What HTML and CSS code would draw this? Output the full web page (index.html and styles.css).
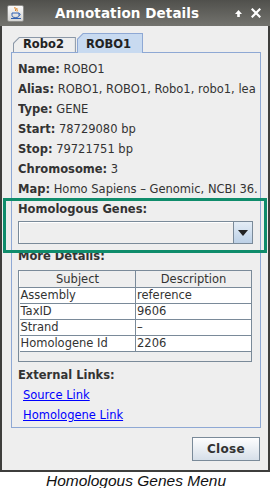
FILE: index.html
```html
<!DOCTYPE html>
<html>
<head>
<meta charset="utf-8">
<link rel="stylesheet" href="styles.css">
</head>
<body>
<div class="window">
  <div class="titlebar">
    <span class="app-icon">
      <svg width="14" height="14" viewBox="0 0 14 14">
        <path d="M6 1 C5 2.5 7.5 3 6.5 5 M8 2 C7 3.5 9 4 8 5.5" stroke="#e07a10" stroke-width="1" fill="none"/>
        <path d="M3 7 h7 v2.5 c0 1.5 -1.5 2 -3.5 2 s-3.5 -0.5 -3.5 -2 z" fill="none" stroke="#3060b0" stroke-width="1"/>
        <path d="M10 7.5 c1.8 0 1.8 2 0 2" fill="none" stroke="#3060b0" stroke-width="0.8"/>
        <path d="M2 12.5 h10" stroke="#3060b0" stroke-width="1"/>
      </svg>
    </span>
    <span class="title">Annotation Details</span>
    <span class="tb-btns">
      <svg width="9" height="9" viewBox="0 0 9 9"><path d="M4.5 1 L8 5 H5.8 V8 H3.2 V5 H1 Z" fill="#ffffff"/></svg>
      <svg width="10" height="10" viewBox="0 0 10 10"><path d="M1.5 1.5 L8.5 8.5 M8.5 1.5 L1.5 8.5" stroke="#ffffff" stroke-width="2.2" stroke-linecap="square"/></svg>
    </span>
  </div>
  <div class="content">
    <div class="tabs">
      <div class="tab"><div class="tab-in">Robo2</div></div>
      <div class="tab sel"><div class="tab-in">ROBO1</div></div>
    </div>
    <div class="panel">
      <div class="row"><b>Name:</b> ROBO1</div>
      <div class="row"><b>Alias:</b> ROBO1, ROBO1, Robo1, robo1, lea</div>
      <div class="row"><b>Type:</b> GENE</div>
      <div class="row"><b>Start:</b> 78729080 bp</div>
      <div class="row"><b>Stop:</b> 79721751 bp</div>
      <div class="row"><b>Chromosome:</b> 3</div>
      <div class="row"><b>Map:</b> Homo Sapiens – Genomic, NCBI 36.</div>
      <div class="row"><b>Homologous Genes:</b></div>
      <div class="combo">
        <div class="combo-field"></div>
        <div class="combo-btn">
          <svg width="10" height="6" viewBox="0 0 10 6"><path d="M0 0 H10 L5 6 Z" fill="#222"/></svg>
        </div>
      </div>
      <div class="row more"><b>More Details:</b></div>
      <div class="scroll">
        <table class="grid">
          <thead><tr><th class="c1">Subject</th><th>Description</th></tr></thead>
          <tbody>
            <tr><td>Assembly</td><td>reference</td></tr>
            <tr><td>TaxID</td><td>9606</td></tr>
            <tr><td>Strand</td><td>–</td></tr>
            <tr><td>Homologene Id</td><td>2206</td></tr>
          </tbody>
        </table>
      </div>
      <div class="row ext"><b>External Links:</b></div>
      <div class="row link"><a href="#">Source Link</a></div>
      <div class="row link"><a href="#">Homologene Link</a></div>
    </div>
    <div class="buttons"><button class="btn">Close</button></div>
  </div>
  <div class="highlight"></div>
</div>
<div class="caption">Homologous Genes Menu</div>
</body>
</html>
```
FILE: styles.css
```css
* { box-sizing: border-box; }
html, body { margin: 0; padding: 0; background: #ffffff; }
body {
  width: 272px;
  font-family: "DejaVu Sans", sans-serif;
  font-size: 11.5px;
  color: #333333;
}
.window {
  position: relative;
  width: 270px;
  height: 472px;
  border: 2px solid #3e3e3c;
  border-top: 0;
  background: #eeeeee;
  display: flex;
  flex-direction: column;
}
.titlebar {
  height: 26px;
  margin: 0 -2px;
  background: linear-gradient(#50504c, #73736e);
  display: flex;
  align-items: center;
  color: #ffffff;
}
.app-icon {
  margin-left: 7px;
  width: 17px;
  height: 17px;
  border: 1px solid #8d8d8a;
  border-radius: 2px;
  background: linear-gradient(#fafafa, #d4d4d2);
  display: flex;
  align-items: center;
  justify-content: center;
}
.title {
  margin-left: 31px;
  font-weight: bold;
  font-size: 13.5px;
  letter-spacing: 0.1px;
}
.tb-btns {
  margin-left: auto;
  margin-right: 9px;
  display: flex;
  align-items: center;
  gap: 8px;
}
.content {
  flex: 1;
  display: flex;
  flex-direction: column;
  padding: 7px 6px 0 9px;
}
.tabs {
  display: flex;
  align-items: flex-end;
  height: 19px;
  padding-left: 2px;
}
.tab {
  height: 15px;
  background: #8b98a8;
  clip-path: polygon(6px 0, 100% 0, 100% 100%, 0 100%, 0 6px);
  padding: 1px 1px 0 1px;
}
.tab-in {
  height: 100%;
  background: #eeeeee;
  clip-path: polygon(5.5px 0, 100% 0, 100% 100%, 0 100%, 0 5.5px);
  font-weight: bold;
  font-size: 11.5px;
  line-height: 13px;
  padding: 0 11px 0 9px;
  color: #222222;
}
.tab.sel {
  height: 20px;
  margin-bottom: -1px;
  margin-left: 1px;
  background: #8ea8d4;
  position: relative;
  z-index: 1;
}
.tab.sel .tab-in {
  background: #c8daf0;
  line-height: 21px;
  padding: 0 11px 0 8px;
}
.panel {
  width: 250px;
  height: 376px;
  border: 1px solid #8ea8d4;
  padding: 6px 0 0 6px;
  overflow: hidden;
}
.row {
  height: 20px;
  line-height: 20px;
  white-space: nowrap;
  overflow: hidden;
  width: 239px;
}
.row b { color: #333333; }
.combo {
  margin-top: 2px;
  width: 235px;
  height: 23px;
  border: 1px solid #7a8a99;
  display: flex;
}
.combo-field {
  flex: 1;
  background: #eeeeee;
  border-top: 1px solid #ffffff;
  border-left: 1px solid #ffffff;
}
.combo-btn {
  width: 19px;
  border-left: 1px solid #7a8a99;
  background: linear-gradient(#e4edf6, #bcd0e6);
  display: flex;
  align-items: center;
  justify-content: center;
}
.row.more { margin-top: 2px; }
.scroll {
  margin-top: 4px;
  width: 234px;
  height: 92px;
  border: 1px solid #7a8a99;
  background: #eeeeee;
}
.grid {
  border-collapse: collapse;
  width: 233px;
  table-layout: fixed;
}
.grid th {
  height: 16px;
  font-weight: normal;
  font-size: 11.5px;
  line-height: 14px;
  padding: 0;
  text-align: center;
  background: #eeeeee;
  border-right: 1px solid #7a8a99;
  border-bottom: 1px solid #7a8a99;
  color: #333333;
}
.grid th.c1 { width: 116px; border-left: 1px solid #ffffff; }
.grid td {
  height: 16px;
  line-height: 15px;
  padding: 0 0 0 1px;
  background: #ffffff;
  border-right: 1px solid #7a8a99;
  border-bottom: 1px solid #7a8a99;
  white-space: nowrap;
  overflow: hidden;
  color: #333333;
}
.row.ext { margin-top: 3px; }
.row.link { padding-left: 5px; }
.row.link a { color: #0000ff; text-decoration: underline; }
.buttons {
  display: flex;
  justify-content: flex-end;
  padding: 9px 2px 0 0;
}
.btn {
  width: 68px;
  height: 24px;
  border: 1px solid #7a8a99;
  border-radius: 0;
  background: linear-gradient(#fdfdfe, #d6dfe9);
  font-family: "DejaVu Sans", sans-serif;
  font-weight: bold;
  font-size: 12px;
  letter-spacing: 0.3px;
  color: #333333;
  padding: 0;
}
.highlight {
  position: absolute;
  left: 1px;
  top: 198px;
  width: 264px;
  height: 55px;
  border: 3px solid #0f8c6b;
}
.caption {
  margin-top: 1px;
  width: 272px;
  text-align: center;
  font-family: "Liberation Sans", Arial, sans-serif;
  font-style: italic;
  font-size: 15.5px;
  line-height: 16px;
  color: #111111;
}
```
